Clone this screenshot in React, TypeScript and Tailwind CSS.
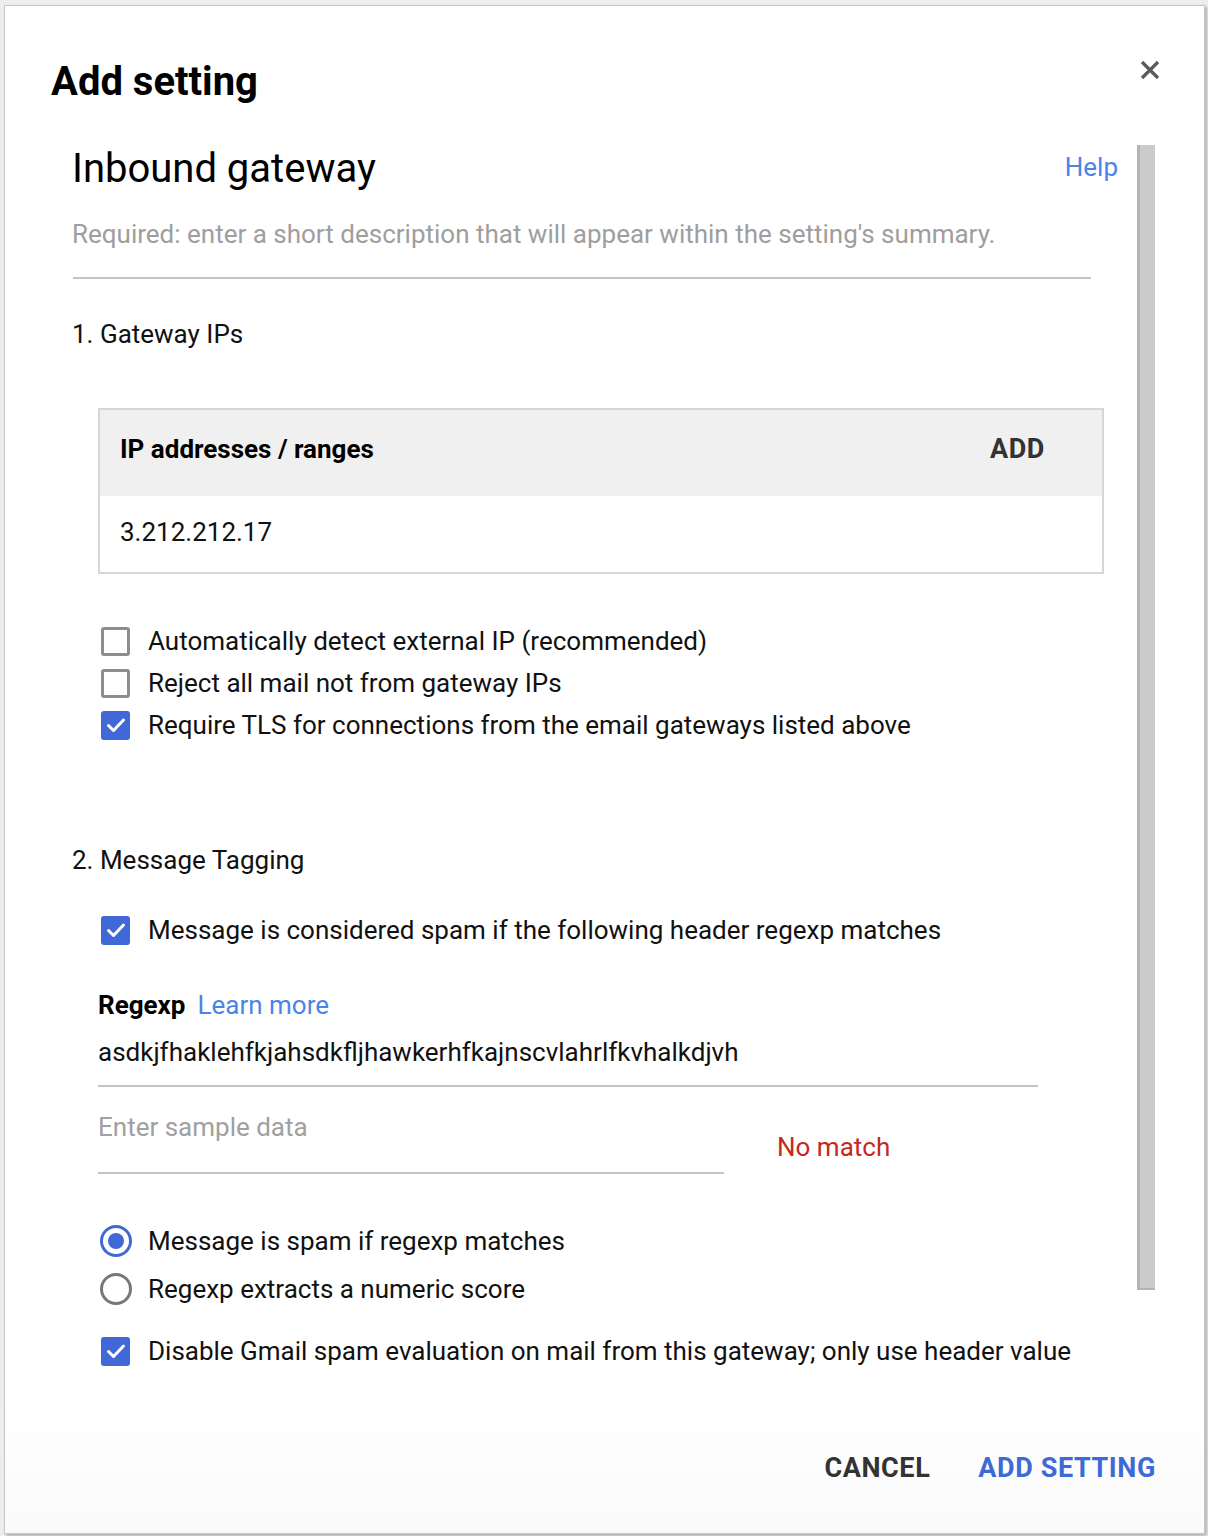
import React from "react";

const Checkbox = ({ checked }: { checked?: boolean }) =>
  checked ? (
    <div className="w-[29px] h-[29px] rounded-[3px] bg-[#4068d6] flex items-center justify-center shrink-0">
      <svg width="24" height="24" viewBox="0 0 24 24" fill="none">
        <path d="M4.5 12.5l5 5L19.5 7" stroke="#fff" strokeWidth="3" strokeLinecap="round" strokeLinejoin="round" />
      </svg>
    </div>
  ) : (
    <div className="w-[29px] h-[29px] rounded-[3px] border-[3px] border-[#8d8d8d] bg-white shrink-0" />
  );

const Radio = ({ checked }: { checked?: boolean }) =>
  checked ? (
    <div className="w-[32px] h-[32px] rounded-full border-[3px] border-[#4068d6] flex items-center justify-center shrink-0">
      <div className="w-[16px] h-[16px] rounded-full bg-[#4068d6]" />
    </div>
  ) : (
    <div className="w-[32px] h-[32px] rounded-full border-[3px] border-[#777] shrink-0" />
  );

const CheckRow = ({ checked, label }: { checked?: boolean; label: string }) => (
  <div className="flex items-center h-[42px] gap-[18px]">
    <Checkbox checked={checked} />
    <span className="text-[26px] leading-[32px] text-[#111]">{label}</span>
  </div>
);

const RadioRow = ({ checked, label }: { checked?: boolean; label: string }) => (
  <div className="flex items-center h-[48px] gap-[16px]">
    <Radio checked={checked} />
    <span className="text-[26px] leading-[32px] text-[#111]">{label}</span>
  </div>
);

export default function App() {
  return (
    <div className="min-h-[1536px] bg-[#ededed] pt-[5px] pl-[4px] font-['Roboto',sans-serif]">
      <div className="w-[1201px] h-[1529px] bg-white border border-[#c6c6c6] shadow-[2px_2px_3px_rgba(0,0,0,0.25)] flex flex-col">
        {/* header */}
        <div className="flex items-start justify-between pt-[52px] pl-[46px] pr-[43px]">
          <h1 className="text-[40px] leading-[48px] font-bold text-black">Add setting</h1>
          <svg className="mt-[1px]" width="22" height="22" viewBox="0 0 22 22">
            <path d="M3 3L19 19M19 3L3 19" stroke="#5a5a5a" strokeWidth="3.2" />
          </svg>
        </div>

        {/* scroll area */}
        <div className="flex mt-[39px] ml-[67px] mr-[49px] h-[1255px]">
          <div className="flex-1 overflow-hidden pr-[19px]">
            <div className="flex items-start justify-between h-[48px]">
              <h2 className="text-[40px] leading-[48px] text-black">Inbound gateway</h2>
              <a className="mt-[6px] text-[26px] leading-[32px] text-[#4b84e8]">Help</a>
            </div>
            <p className="mt-[25px] text-[26px] leading-[32px] text-[#9e9e9e]">
              Required: enter a short description that will appear within the setting's summary.
            </p>
            <div className="mt-[27px] ml-[1px] h-[2px] w-[1018px] bg-[#c4c4c4]" />

            <h3 className="mt-[39px] text-[26px] leading-[32px] text-[#111]">1. Gateway IPs</h3>

            <div className="mt-[58px] ml-[26px] w-[1006px] border-2 border-[#d6d6d6]">
              <div className="h-[86px] bg-[#f0f0f0] pt-[23px] pl-[20px] pr-[57px] flex justify-between">
                <span className="text-[26px] leading-[32px] font-bold text-black">IP addresses / ranges</span>
                <span className="text-[27px] leading-[32px] font-bold tracking-[0.6px] text-[#333]">ADD</span>
              </div>
              <div className="h-[76px] pt-[20px] pl-[20px]">
                <span className="text-[26px] leading-[32px] text-[#111]">3.212.212.17</span>
              </div>
            </div>

            <div className="mt-[46px] ml-[29px] flex flex-col">
              <CheckRow label="Automatically detect external IP (recommended)" />
              <CheckRow label="Reject all mail not from gateway IPs" />
              <CheckRow checked label="Require TLS for connections from the email gateways listed above" />
            </div>

            <h3 className="mt-[98px] text-[26px] leading-[32px] text-[#111]">2. Message Tagging</h3>

            <div className="mt-[33px] ml-[29px]">
              <CheckRow checked label="Message is considered spam if the following header regexp matches" />
            </div>

            <div className="mt-[38px] ml-[26px]">
              <div className="flex items-baseline gap-[12px]">
                <span className="text-[26px] leading-[32px] font-bold text-black">Regexp</span>
                <a className="text-[26px] leading-[32px] text-[#4b84e8]">Learn more</a>
              </div>
              <div className="mt-[15px] w-[940px] pb-[17px] border-b-2 border-[#c4c4c4] text-[26px] leading-[32px] text-[#111]">
                asdkjfhaklehfkjahsdkfljhawkerhfkajnscvlahrlfkvhalkdjvh
              </div>
              <div className="mt-[24px] flex items-start">
                <div className="w-[626px] pb-[29px] border-b-2 border-[#c4c4c4] text-[26px] leading-[32px] text-[#a0a0a0]">
                  Enter sample data
                </div>
                <span className="ml-[53px] mt-[20px] text-[26px] leading-[32px] text-[#c5281c]">No match</span>
              </div>

              <div className="mt-[43px] ml-[2px] flex flex-col">
                <RadioRow checked label="Message is spam if regexp matches" />
                <RadioRow label="Regexp extracts a numeric score" />
              </div>

              <div className="mt-[17px] ml-[3px]">
                <CheckRow checked label="Disable Gmail spam evaluation on mail from this gateway; only use header value" />
              </div>
            </div>
          </div>

          {/* scrollbar */}
          <div className="w-[18px] shrink-0">
            <div className="h-[1145px] bg-[#cbcbcb] border-l-[3px] border-b-2 border-[#b3b3b3]" />
          </div>
        </div>

        {/* footer */}
        <div className="flex-1 flex items-start justify-end gap-[48px] pt-[52px] pr-[48px] bg-gradient-to-b from-white to-[#fafafa]">
          <button className="text-[27px] leading-[32px] font-bold tracking-[0.6px] text-[#333]">CANCEL</button>
          <button className="text-[27px] leading-[32px] font-bold tracking-[0.6px] text-[#3d6ad6]">ADD SETTING</button>
        </div>
      </div>
    </div>
  );
}
